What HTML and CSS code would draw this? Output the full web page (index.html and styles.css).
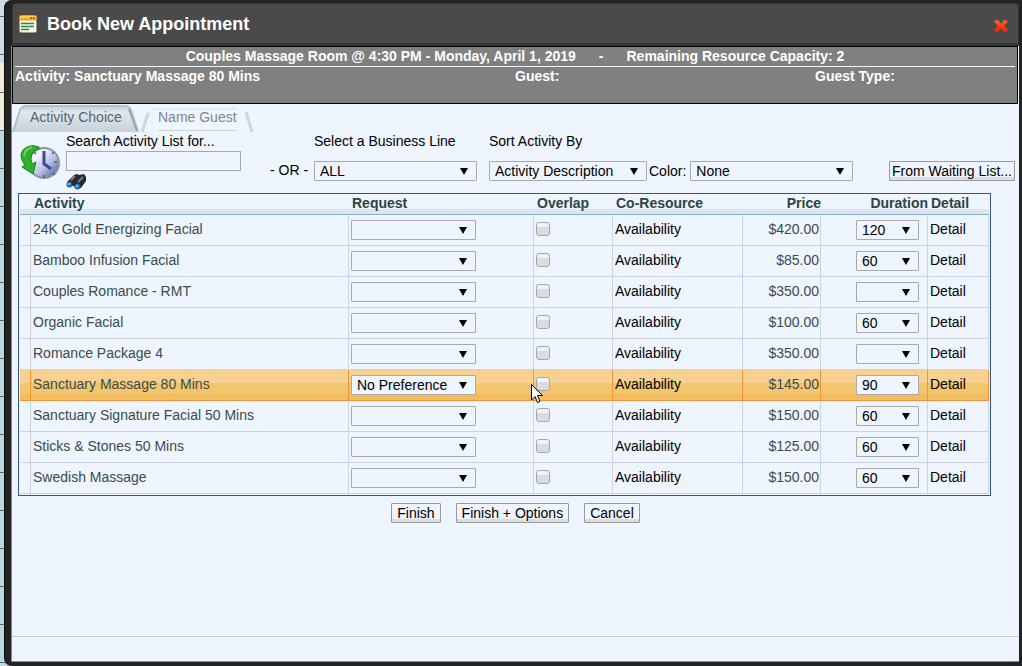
FILE: index.html
```
<!DOCTYPE html>
<html lang="en">
<head>
    <meta charset="UTF-8">
    <meta name="viewport" content="width=device-width, initial-scale=1.0">
    <title>Book New Appointment</title>
    <link rel="stylesheet" href="styles.css">
</head>
<body>
    <div class="window">
        <div class="title-bar">
            <svg class="title-icon" viewBox="0 0 20 20" width="20" height="20">
                <rect x="1" y="1" width="18" height="18" rx="2" fill="#f6f6f0" stroke="#5a3a18"/>
                <path d="M1.500 1.500h17v5h-17z" fill="#f0a81e"/>
                <path d="M2 2h16v2H2z" fill="#f9cf5c"/>
                <path d="M12 3h2v2h-2zM15 3h2v2h-2z" fill="#b8651a"/>
                <path d="M3 9.500h13M3 12.500h13M3 15.500h8" stroke="#2f8a35" stroke-width="1.500"/>
            </svg>
            <h1>Book New Appointment</h1>
            <button class="close-btn" type="button" aria-label="Close">
                <svg viewBox="0 0 14 12" width="14" height="12">
                    <defs>
                        <linearGradient id="close-fill" x1="0" y1="0" x2="0" y2="1">
                            <stop offset="0" stop-color="#f0682a"/>
                            <stop offset="1" stop-color="#ff1800"/>
                        </linearGradient>
                    </defs>
                    <path d="M0 2L2 0H4L7 3.500L10 0H12L14 2L10 6L14 10L12 12H10L7 8.500L4 12H2L0 10L4 6z" fill="url(#close-fill)"/>
                </svg>
            </button>
        </div>

        <div class="content">
            <div class="summary">
                <div class="summary-top">
                    <span>Couples Massage Room @ 4:30 PM - Monday, April 1, 2019</span>
                    <span>-</span>
                    <span>Remaining Resource Capacity: 2</span>
                </div>
                <div class="summary-info">
                    <span>Activity: Sanctuary Massage 80 Mins</span>
                    <span>Guest:</span>
                    <span>Guest Type:</span>
                </div>
            </div>

            <div class="tabs">
                <button class="tab tab-active" type="button">
                    <svg class="tab-shape" viewBox="0 0 127 27" preserveAspectRatio="none">
                        <defs>
                            <linearGradient id="tab-fill" x1="0" y1="0" x2="0" y2="1">
                                <stop offset="0" stop-color="#c3d0d6"/>
                                <stop offset="0.250" stop-color="#dfe7ef"/>
                                <stop offset="1" stop-color="#c5d3d9"/>
                            </linearGradient>
                        </defs>
                        <path d="M0 27L7 5Q9 1 14 1H113Q118 1 120 5L127 27z" fill="url(#tab-fill)"/>
                        <path d="M1 27L8 5Q10 1 14 1H113Q117 1 119 5L126 27" fill="none" stroke="#b4c1c8" stroke-width="2"/>
                        <path d="M117 4L125 26" stroke="#97a4aa" stroke-width="2"/>
                    </svg>
                    <span>Activity Choice</span>
                </button>
                <button class="tab" type="button">
                    <svg class="tab-shape" viewBox="0 0 114 27" preserveAspectRatio="none">
                        <path d="M2 27L8 9Q10 4 15 4H96" fill="none" stroke="#d3dee4"/>
                        <path d="M1 27L7 8" stroke="#ccd8de" stroke-width="3"/>
                        <path d="M105 7L111 27" stroke="#ccd8de" stroke-width="3"/>
                    </svg>
                    <span>Name Guest</span>
                </button>
            </div>

            <div class="toolbar">
                <svg class="clock-icon" viewBox="0 0 40 38" width="40" height="38">
                    <defs>
                        <linearGradient id="clock-face" x1="0" y1="0" x2="1" y2="1">
                            <stop offset="0.300" stop-color="#eef1fa"/>
                            <stop offset="0.600" stop-color="#b4bde0"/>
                            <stop offset="1" stop-color="#36478f"/>
                        </linearGradient>
                    </defs>
                    <circle cx="24" cy="19" r="15" fill="url(#clock-face)" stroke="#8d93a5" stroke-width="2"/>
                    <path d="M24 20V7M23 19L31 25" stroke="#3f4a86" stroke-width="3" fill="none"/>
                    <path d="M34 18h3M24 31v3M32 10l2-2M33 29l2 2M16 10l-2-2" stroke="#555d84" stroke-width="1.500"/>
                    <path d="M19 3Q12 0 7 3Q1 6 1 12Q2 18 5 21L2 23L13 30L16 18L12 20Q10 14 12 10Q14 6 19 5z" fill="#2fb02b" stroke="#237d25"/>
                    <path d="M4 12Q5 5 12 3" stroke="#6fd45f" stroke-width="2" fill="none"/>
                </svg>

                <div class="search-field">
                    <label for="search">Search Activity List for...</label>
                    <input id="search" type="text">
                    <button class="find-btn" type="button" aria-label="Search">
                        <svg viewBox="0 0 20 17" width="20" height="17">
                            <path d="M1 9L8 2L11 1L13 2L18 1L20 4V8L15 15H9L8 13H2z" fill="#26282c"/>
                            <path d="M5 7L9 3M12 9L17 4" stroke="#777c85" stroke-width="2"/>
                            <circle cx="3.500" cy="11.500" r="3" fill="#1f5ca8"/>
                            <circle cx="11.500" cy="13.500" r="3" fill="#1f5ca8"/>
                            <circle cx="3" cy="11" r="1.500" fill="#6eb6f5"/>
                            <circle cx="11" cy="13" r="1.500" fill="#6eb6f5"/>
                        </svg>
                    </button>
                </div>

                <span class="or">- OR -</span>

                <div class="field line-field">
                    <label for="line">Select a Business Line</label>
                    <select id="line"><option>ALL</option></select>
                </div>

                <div class="field sort-field">
                    <label for="sort">Sort Activity By</label>
                    <select id="sort"><option>Activity Description</option></select>
                </div>

                <div class="color-field">
                    <label for="color">Color:</label>
                    <select id="color"><option>None</option></select>
                </div>

                <button class="btn waiting-btn" type="button">From Waiting List...</button>
            </div>

            <div class="table-frame">
                <table>
                    <colgroup>
                        <col class="col-mark">
                        <col>
                        <col class="col-request">
                        <col class="col-overlap">
                        <col class="col-resource">
                        <col class="col-price">
                        <col class="col-duration">
                        <col class="col-detail">
                    </colgroup>
                    <thead>
                        <tr>
                            <th></th>
                            <th>Activity</th>
                            <th>Request</th>
                            <th>Overlap</th>
                            <th>Co-Resource</th>
                            <th class="right">Price</th>
                            <th class="right">Duration</th>
                            <th>Detail</th>
                        </tr>
                    </thead>
                    <tbody>
                        <tr>
                            <td></td>
                            <td>24K Gold Energizing Facial</td>
                            <td><select class="request" aria-label="Request"><option></option></select></td>
                            <td><input type="checkbox" aria-label="Overlap"></td>
                            <td><a href="#">Availability</a></td>
                            <td class="price">$420.00</td>
                            <td class="duration"><select aria-label="Duration"><option>120</option></select></td>
                            <td><a href="#">Detail</a></td>
                        </tr>
                        <tr>
                            <td></td>
                            <td>Bamboo Infusion Facial</td>
                            <td><select class="request" aria-label="Request"><option></option></select></td>
                            <td><input type="checkbox" aria-label="Overlap"></td>
                            <td><a href="#">Availability</a></td>
                            <td class="price">$85.00</td>
                            <td class="duration"><select aria-label="Duration"><option>60</option></select></td>
                            <td><a href="#">Detail</a></td>
                        </tr>
                        <tr>
                            <td></td>
                            <td>Couples Romance - RMT</td>
                            <td><select class="request" aria-label="Request"><option></option></select></td>
                            <td><input type="checkbox" aria-label="Overlap"></td>
                            <td><a href="#">Availability</a></td>
                            <td class="price">$350.00</td>
                            <td class="duration"><select aria-label="Duration"><option></option></select></td>
                            <td><a href="#">Detail</a></td>
                        </tr>
                        <tr>
                            <td></td>
                            <td>Organic Facial</td>
                            <td><select class="request" aria-label="Request"><option></option></select></td>
                            <td><input type="checkbox" aria-label="Overlap"></td>
                            <td><a href="#">Availability</a></td>
                            <td class="price">$100.00</td>
                            <td class="duration"><select aria-label="Duration"><option>60</option></select></td>
                            <td><a href="#">Detail</a></td>
                        </tr>
                        <tr>
                            <td></td>
                            <td>Romance Package 4</td>
                            <td><select class="request" aria-label="Request"><option></option></select></td>
                            <td><input type="checkbox" aria-label="Overlap"></td>
                            <td><a href="#">Availability</a></td>
                            <td class="price">$350.00</td>
                            <td class="duration"><select aria-label="Duration"><option></option></select></td>
                            <td><a href="#">Detail</a></td>
                        </tr>
                        <tr class="selected">
                            <td></td>
                            <td>Sanctuary Massage 80 Mins</td>
                            <td><select class="request" aria-label="Request"><option>No Preference</option></select></td>
                            <td class="hovered">
                                <input type="checkbox" aria-label="Overlap">
                                <svg class="pointer" viewBox="0 0 12 19" width="12" height="19">
                                    <path d="M0.500 0.500V16L4 12.500L6.500 18.500L9 17.500L6.500 11.500H11.500z" fill="#fff" stroke="#000"/>
                                </svg>
                            </td>
                            <td><a href="#">Availability</a></td>
                            <td class="price">$145.00</td>
                            <td class="duration"><select aria-label="Duration"><option>90</option></select></td>
                            <td><a href="#">Detail</a></td>
                        </tr>
                        <tr>
                            <td></td>
                            <td>Sanctuary Signature Facial 50 Mins</td>
                            <td><select class="request" aria-label="Request"><option></option></select></td>
                            <td><input type="checkbox" aria-label="Overlap"></td>
                            <td><a href="#">Availability</a></td>
                            <td class="price">$150.00</td>
                            <td class="duration"><select aria-label="Duration"><option>60</option></select></td>
                            <td><a href="#">Detail</a></td>
                        </tr>
                        <tr>
                            <td></td>
                            <td>Sticks &amp; Stones 50 Mins</td>
                            <td><select class="request" aria-label="Request"><option></option></select></td>
                            <td><input type="checkbox" aria-label="Overlap"></td>
                            <td><a href="#">Availability</a></td>
                            <td class="price">$125.00</td>
                            <td class="duration"><select aria-label="Duration"><option>60</option></select></td>
                            <td><a href="#">Detail</a></td>
                        </tr>
                        <tr>
                            <td></td>
                            <td>Swedish Massage</td>
                            <td><select class="request" aria-label="Request"><option></option></select></td>
                            <td><input type="checkbox" aria-label="Overlap"></td>
                            <td><a href="#">Availability</a></td>
                            <td class="price">$150.00</td>
                            <td class="duration"><select aria-label="Duration"><option>60</option></select></td>
                            <td><a href="#">Detail</a></td>
                        </tr>
                    </tbody>
                </table>
            </div>

            <div class="actions">
                <button class="btn" type="button">Finish</button>
                <button class="btn" type="button">Finish + Options</button>
                <button class="btn" type="button">Cancel</button>
            </div>

            <div class="footer"></div>
        </div>
    </div>
</body>
</html>
```

FILE: styles.css
```
* {
    box-sizing: border-box;
}
body {
    margin: 0;
    padding-left: 4px;
    font-family: "Liberation Sans", Arial, sans-serif;
    font-size: 14px;
    line-height: 16px;
    color: #000;
    /* calendar page behind the dialog */
    background:
        repeating-linear-gradient(transparent 0 16px, #666 16px 17px, transparent 17px 38px),
        linear-gradient(#cddbe8 0 63px, #eeeed8 63px 130px, #b9dae0 130px);
}
.window {
    display: flex;
    flex-direction: column;
    min-height: 100vh;
    background: #222423;
    border-left: 1px solid #0c0c0c;
    border-radius: 8px 0 0 8px;
    padding: 3px 3px 4px 7px;
}
.title-bar {
    display: flex;
    align-items: center;
    height: 43px;
    padding: 0 10px 0 5px;
    background: #4a4a4a;
    border: 1px solid #333;
    border-bottom: 3px solid #333;
    border-radius: 4px 4px 0 0;
}
.title-bar h1 {
    flex: 1;
    margin: 0 0 0 9px;
    font-size: 18px;
    line-height: 20px;
    color: #fff;
}
.close-btn {
    display: flex;
    padding: 0;
    border: none;
    background: none;
    margin-top: 4px;
}
.content {
    flex: 1;
    display: flex;
    flex-direction: column;
    background: #eef5fe;
    border-bottom: 1px solid #889;
    box-shadow: -1px 0 #888;
}
.summary {
    height: 58px;
    margin-right: 1px;
    padding: 1px 2px;
    background: #808080;
    border: 1px solid #000;
    color: #fff;
    font-weight: bold;
}
.summary-top {
    display: flex;
    justify-content: center;
    gap: 23px;
    height: 19px;
    border-bottom: 1px solid #eef5fe;
}
.summary-info {
    display: grid;
    grid-template-columns: 5fr 3fr 2fr;
    padding-top: 1px;
}
.tabs {
    display: flex;
    gap: 2px;
    height: 28px;
    padding-top: 1px;
}
.tab {
    position: relative;
    width: 114px;
    padding: 0 0 0 17px;
    border: none;
    background: none;
    font: inherit;
    color: #7d8794;
    text-align: left;
}
.tab span {
    position: relative;
    display: inline-block;
    height: 24px;
    padding-top: 2px;
    border-bottom: 1px solid #ccd4de;
}
.tab-active {
    width: 127px;
    padding-left: 18px;
    color: #5b646c;
}
.tab-active span {
    border-color: transparent;
}
.tab-shape {
    position: absolute;
    inset: 0;
    width: 100%;
    height: 100%;
}
.toolbar {
    display: flex;
    align-items: flex-start;
    height: 61px;
    padding: 1px 4px 0 8px;
}
.clock-icon {
    margin: 11px 6px 0 0;
}
.search-field {
    display: flex;
    flex-direction: column;
    width: 175px;
    margin-right: 29px;
}
.search-field input {
    height: 20px;
    margin-top: 2px;
    border: 1px solid #a9a9a9;
    background: #eef5fe;
    font: inherit;
}
.find-btn {
    display: flex;
    align-self: flex-start;
    padding: 0;
    margin-top: 2px;
    border: none;
    background: none;
}
.or {
    width: 44px;
    margin-top: 29px;
}
.field {
    display: flex;
    flex-direction: column;
    gap: 12px;
}
.line-field {
    width: 163px;
    margin-right: 12px;
}
.sort-field {
    width: 158px;
    margin-right: 2px;
}
.color-field {
    display: flex;
    align-items: center;
    margin-top: 28px;
}
.color-field select {
    width: 163px;
    margin-left: 4px;
}
select {
    appearance: none;
    height: 20px;
    padding: 0 18px 0 5px;
    border: 1px solid #a9a9a9;
    border-radius: 1px;
    background: #eef5fe url("data:image/svg+xml,%3Csvg xmlns='http://www.w3.org/2000/svg' width='8' height='7'%3E%3Cpath d='M0 0h8L4 7z'/%3E%3C/svg%3E") no-repeat right 8px center;
    font: inherit;
    color: #000;
}
.btn {
    height: 20px;
    padding: 0 5px;
    border: 1px solid #999;
    border-radius: 1px;
    background: linear-gradient(#eef5fe 0 15px, #dcdcdc 15px);
    font: inherit;
    line-height: 16px;
    color: #000;
    white-space: nowrap;
}
.waiting-btn {
    margin: 28px 0 0 auto;
    padding: 0 2px;
}
.table-frame {
    margin: 0 28px 0 6px;
    padding: 1px;
    border: 1px solid #36558c;
}
table {
    width: 100%;
    table-layout: fixed;
    border-collapse: separate;
    border-spacing: 0;
}
.col-mark {
    width: 11px;
}
.col-request {
    width: 185px;
}
.col-overlap {
    width: 79px;
}
.col-resource {
    width: 130px;
}
.col-price {
    width: 78px;
}
.col-duration {
    width: 107px;
}
.col-detail {
    width: 61px;
}
th {
    height: 20px;
    padding: 0 0 3px 3px;
    border-bottom: 1px solid #8fb1d0;
    background: linear-gradient(transparent 14px, #dae6ee 14px);
    color: #2c4444;
    text-align: left;
}
.right {
    text-align: right;
}
td {
    height: 31px;
    padding: 0 2px 2px;
    border-right: 1px solid #cbd3e2;
    border-bottom: 1px solid #cbd3e2;
    color: #3a4c4c;
    white-space: nowrap;
}
td a {
    color: #000;
    text-decoration: none;
}
td select {
    display: block;
    margin-top: 2px;
}
.request {
    width: 125px;
}
.price {
    padding-right: 1px;
    text-align: right;
}
.duration select {
    width: 63px;
    margin-left: auto;
    margin-right: 6px;
}
td input {
    appearance: none;
    display: block;
    width: 14px;
    height: 14px;
    margin: 0;
    border: 1px solid #a6a6a6;
    border-radius: 3px;
    background: linear-gradient(#f0f2f5 0 4px, #dcdcdc 4px);
}
.selected td {
    border-color: #f0943a;
    background: linear-gradient(#f6d18f 0 13px, #f2c56e 13px 24px, #f0be5e 24px);
}
.hovered {
    position: relative;
}
.pointer {
    position: absolute;
    left: -3px;
    top: 14px;
}
.actions {
    display: flex;
    justify-content: center;
    gap: 15px;
    padding-top: 7px;
}
.footer {
    height: 25px;
    margin: auto 1px 0 0;
    border-top: 1px solid #c8c8c8;
}
```
